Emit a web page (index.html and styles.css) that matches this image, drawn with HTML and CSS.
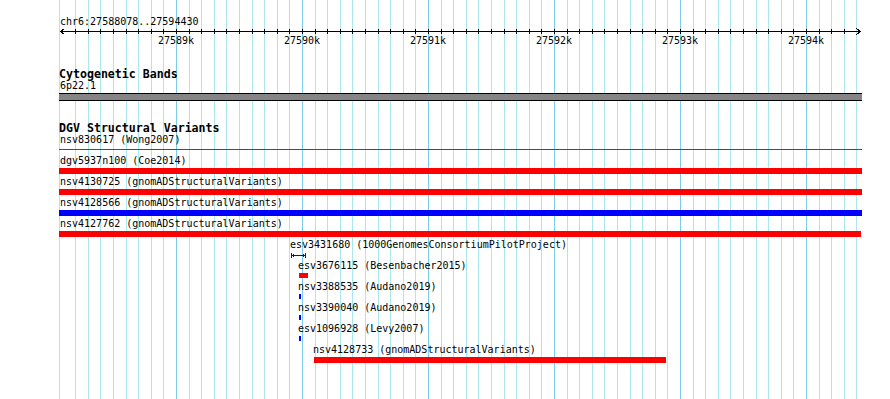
FILE: index.html
```html
<!DOCTYPE html>
<html>
<head>
<meta charset="utf-8">
<link rel="stylesheet" href="styles.css">
</head>
<body>
<div class="browser">
  <svg class="grid" width="890" height="399" viewBox="0 0 890 399">
    <path class="minor" d="M59.5 0V399M75.5 0V399M88.5 0V399M100.5 0V399M113.5 0V399M126.5 0V399M138.5 0V399M151.5 0V399M163.5 0V399M189.5 0V399M201.5 0V399M214.5 0V399M226.5 0V399M239.5 0V399M252.5 0V399M264.5 0V399M277.5 0V399M289.5 0V399M315.5 0V399M327.5 0V399M340.5 0V399M352.5 0V399M365.5 0V399M378.5 0V399M390.5 0V399M403.5 0V399M415.5 0V399M441.5 0V399M453.5 0V399M466.5 0V399M478.5 0V399M491.5 0V399M504.5 0V399M516.5 0V399M529.5 0V399M541.5 0V399M567.5 0V399M579.5 0V399M592.5 0V399M604.5 0V399M617.5 0V399M630.5 0V399M642.5 0V399M655.5 0V399M667.5 0V399M693.5 0V399M705.5 0V399M718.5 0V399M730.5 0V399M743.5 0V399M756.5 0V399M768.5 0V399M781.5 0V399M793.5 0V399M819.5 0V399M831.5 0V399M844.5 0V399M856.5 0V399"/>
    <path class="major" d="M176.5 0V399M302.5 0V399M428.5 0V399M554.5 0V399M680.5 0V399M806.5 0V399"/>
  </svg>

  <div class="tracks">
    <div class="txt" style="margin-left:60px">chr6:27588078..27594430</div>
    <svg class="ruler" width="890" height="18" viewBox="0 0 890 18">
      <path class="rline" d="M60 3.5H861"/>
      <path class="rline" d="M64.5 0.5L60.5 3.5L64.5 6.5M856.5 0.5L860.5 3.5L856.5 6.5"/>
      <path class="rline" d="M75.5 1V6M88.5 1V6M100.5 1V6M113.5 1V6M126.5 1V6M138.5 1V6M151.5 1V6M163.5 1V6M176.5 1V6M189.5 1V6M201.5 1V6M214.5 1V6M226.5 1V6M239.5 1V6M252.5 1V6M264.5 1V6M277.5 1V6M289.5 1V6M302.5 1V6M315.5 1V6M327.5 1V6M340.5 1V6M352.5 1V6M365.5 1V6M378.5 1V6M390.5 1V6M403.5 1V6M415.5 1V6M428.5 1V6M441.5 1V6M453.5 1V6M466.5 1V6M478.5 1V6M491.5 1V6M504.5 1V6M516.5 1V6M529.5 1V6M541.5 1V6M554.5 1V6M567.5 1V6M579.5 1V6M592.5 1V6M604.5 1V6M617.5 1V6M630.5 1V6M642.5 1V6M655.5 1V6M667.5 1V6M680.5 1V6M693.5 1V6M705.5 1V6M718.5 1V6M730.5 1V6M743.5 1V6M756.5 1V6M768.5 1V6M781.5 1V6M793.5 1V6M806.5 1V6M819.5 1V6M831.5 1V6M844.5 1V6"/>
      <text class="tick" x="176" y="15.5">27589k</text>
      <text class="tick" x="302" y="15.5">27590k</text>
      <text class="tick" x="428" y="15.5">27591k</text>
      <text class="tick" x="554" y="15.5">27592k</text>
      <text class="tick" x="680" y="15.5">27593k</text>
      <text class="tick" x="806" y="15.5">27594k</text>
    </svg>

    <section class="track cyto">
      <div class="heading">Cytogenetic Bands</div>
      <div class="txt" style="margin-left:60px">6p22.1</div>
      <div class="band"></div>
    </section>

    <section class="track dgv">
      <div class="heading">DGV Structural Variants</div>

      <div class="feature">
        <div class="txt" style="margin-left:60px">nsv830617 (Wong2007)</div>
        <div class="slot"><div class="bar thin red full"></div></div>
      </div>
      <div class="feature">
        <div class="txt" style="margin-left:60px">dgv5937n100 (Coe2014)</div>
        <div class="slot"><div class="bar red full"></div></div>
      </div>
      <div class="feature">
        <div class="txt" style="margin-left:60px">nsv4130725 (gnomADStructuralVariants)</div>
        <div class="slot"><div class="bar red full"></div></div>
      </div>
      <div class="feature">
        <div class="txt" style="margin-left:60px">nsv4128566 (gnomADStructuralVariants)</div>
        <div class="slot"><div class="bar blue full"></div></div>
      </div>
      <div class="feature">
        <div class="txt" style="margin-left:60px">nsv4127762 (gnomADStructuralVariants)</div>
        <div class="slot"><div class="bar red" style="margin-left:59px;width:802px"></div></div>
      </div>
      <div class="feature">
        <div class="txt" style="margin-left:290px">esv3431680 (1000GenomesConsortiumPilotProject)</div>
        <div class="slot">
          <svg class="ibeam" style="margin-left:291px" width="16" height="5" viewBox="0 0 16 5">
            <path d="M0.5 0V5M2.5 1V4M12.5 1V4M14.5 0V5M0 2.5H15"/>
          </svg>
        </div>
      </div>
      <div class="feature">
        <div class="txt" style="margin-left:298px">esv3676115 (Besenbacher2015)</div>
        <div class="slot"><div class="bar small red" style="margin-left:299px;width:9px"></div></div>
      </div>
      <div class="feature">
        <div class="txt" style="margin-left:298px">nsv3388535 (Audano2019)</div>
        <div class="slot"><div class="bar small blue" style="margin-left:299px;width:2px"></div></div>
      </div>
      <div class="feature">
        <div class="txt" style="margin-left:298px">nsv3390040 (Audano2019)</div>
        <div class="slot"><div class="bar small blue" style="margin-left:299px;width:2px"></div></div>
      </div>
      <div class="feature">
        <div class="txt" style="margin-left:298px">esv1096928 (Levy2007)</div>
        <div class="slot"><div class="bar small blue" style="margin-left:299px;width:2px"></div></div>
      </div>
      <div class="feature">
        <div class="txt" style="margin-left:313px">nsv4128733 (gnomADStructuralVariants)</div>
        <div class="slot"><div class="bar red" style="margin-left:314px;width:352px"></div></div>
      </div>
    </section>
  </div>
</div>
</body>
</html>
```

FILE: styles.css
```css
html, body {
  margin: 0;
  padding: 0;
  background: #ffffff;
}

.browser {
  position: relative;
  width: 890px;
  height: 399px;
  overflow: hidden;
  background: #ffffff;
  color: #000000;
  font-family: "DejaVu Sans Mono", monospace;
}

.grid {
  position: absolute;
  left: 0;
  top: 0;
  z-index: 0;
  shape-rendering: crispEdges;
}

.grid .minor {
  stroke: #aae8ee;
  stroke-width: 1;
  fill: none;
}

.grid .major {
  stroke: #7ccbe9;
  stroke-width: 1;
  fill: none;
}

.tracks {
  position: relative;
  z-index: 1;
  padding-top: 16px;
  display: flex;
  flex-direction: column;
}

.txt {
  font-family: "DejaVu Sans Mono", monospace;
  font-size: 10px;
  line-height: 12px;
  height: 12px;
  white-space: nowrap;
}

.heading {
  font-family: "DejaVu Sans Mono", monospace;
  font-weight: bold;
  font-size: 11.6px;
  line-height: 12px;
  height: 12px;
  margin-left: 59px;
  white-space: nowrap;
}

.ruler {
  display: block;
  shape-rendering: crispEdges;
}

.ruler .rline {
  stroke: #000000;
  stroke-width: 1;
  fill: none;
}

.ruler .tick {
  font-family: "DejaVu Sans Mono", monospace;
  font-size: 10px;
  text-anchor: middle;
  fill: #000000;
}

.track {
  display: flex;
  flex-direction: column;
}

.cyto {
  margin-top: 22px;
}

.band {
  margin: 1px 0 0 59px;
  width: 803px;
  height: 8px;
  box-sizing: border-box;
  background: #858585;
  border-top: 1px solid #000000;
  border-bottom: 1px solid #000000;
}

.dgv {
  margin-top: 21px;
}

.feature {
  display: flex;
  flex-direction: column;
}

.slot {
  height: 6px;
  margin: 1px 0 2px;
  display: flex;
  align-items: flex-start;
}

.bar {
  height: 6px;
  flex: none;
}

.bar.full {
  margin-left: 59px;
  width: 803px;
}

.bar.thin {
  height: 1px;
  margin-top: 2px;
}

.bar.small {
  height: 5px;
}

.red {
  background: #ff0000;
}

.blue {
  background: #0000ff;
}

.ibeam {
  display: block;
  flex: none;
  margin-top: 1px;
  shape-rendering: crispEdges;
}

.ibeam path {
  stroke: #0000ff;
  stroke-width: 1;
  fill: none;
}
```
